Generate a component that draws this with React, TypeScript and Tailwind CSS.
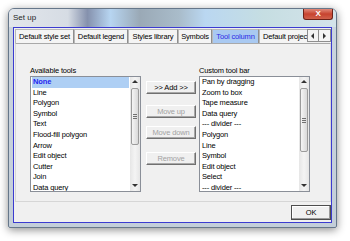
import React from 'react';

const availableTools = [
  'None',
  'Line',
  'Polygon',
  'Symbol',
  'Text',
  'Flood-fill polygon',
  'Arrow',
  'Edit object',
  'Cutter',
  'Join',
  'Data query',
];

const customTools = [
  'Pan by dragging',
  'Zoom to box',
  'Tape measure',
  'Data query',
  '--- divider ---',
  'Polygon',
  'Line',
  'Symbol',
  'Edit object',
  'Select',
  '--- divider ---',
];

const tabs = [
  { label: 'Default style set', w: 'w-[59px]' },
  { label: 'Default legend', w: 'w-[54px]' },
  { label: 'Styles library', w: 'w-[50px]' },
  { label: 'Symbols', w: 'w-[34px]' },
  { label: 'Tool column', w: 'w-[47px]', active: true },
  { label: 'Default projec', w: 'w-[48px]' },
];

const Arrow = ({ dir }: { dir: 'up' | 'down' | 'left' | 'right' }) => {
  const pts = {
    up: '0,4 3,1 6,4',
    down: '0,1 3,4 6,1',
    left: '4,0 1,3 4,6',
    right: '1,0 4,3 1,6',
  }[dir];
  return (
    <svg width="6" height="6" viewBox="0 0 6 6">
      <polygon points={pts} fill="#333" />
    </svg>
  );
};

interface ListBoxProps {
  items: string[];
  selected?: number;
  thumbHeight: string;
}

const ListBox: React.FC<ListBoxProps> = ({ items, selected, thumbHeight }) => (
  <div className="h-[116px] border border-[#8a8f98] bg-white flex">
    <div className="flex-1 overflow-hidden">
      {items.map((item, i) => (
        <div
          key={i}
          className={
            i === selected
              ? 'mx-[1px] h-[10.6px] leading-[10.6px] pl-[1px] whitespace-nowrap bg-[#aecff4] text-[#2525f0] font-bold'
              : 'mx-[1px] h-[10.6px] leading-[10.6px] pl-[1px] whitespace-nowrap text-black'
          }
        >
          {item}
        </div>
      ))}
    </div>
    <div className="w-[10px] flex flex-col bg-gradient-to-r from-[#e6e6e6] via-[#f4f4f4] to-[#e6e6e6]">
      <div className="h-[10px] flex items-center justify-center">
        <Arrow dir="up" />
      </div>
      <div
        className={`${thumbHeight} mt-[1px] mx-[1px] rounded-[2px] border border-[#9b9b9b] bg-gradient-to-r from-[#f5f5f5] to-[#d9d9d9] flex flex-col items-center justify-center gap-[1px]`}
      >
        <div className="w-[4px] h-[1px] bg-[#707070]" />
        <div className="w-[4px] h-[1px] bg-[#707070]" />
        <div className="w-[4px] h-[1px] bg-[#707070]" />
      </div>
      <div className="flex-1" />
      <div className="h-[10px] flex items-center justify-center">
        <Arrow dir="down" />
      </div>
    </div>
  </div>
);

const Button = ({ label, disabled, extra }: { label: string; disabled?: boolean; extra?: string }) => (
  <div
    className={`h-[13px] w-[50px] flex items-center justify-center border border-t-white border-l-white border-r-[#707070] border-b-[#707070] bg-[#f0f0f0] shadow-[inset_-1px_-1px_0_#a8a8a8] ${
      disabled ? 'text-[#a2a2a2]' : 'text-black'
    } ${extra ?? ''}`}
  >
    {label}
  </div>
);

export default function App() {
  return (
    <div className="w-[350px] h-[241px] bg-white overflow-hidden pt-[8px] pl-[8px] font-['Liberation_Sans',Arial,sans-serif] text-[7.5px] tracking-[-0.15px]">
      <div className="w-[329px] h-[220px] rounded-t-[6px] rounded-b-[2px] border border-[#66778a] bg-gradient-to-b from-[#cbd5df] to-[#c3ced9] shadow-[0_2px_8px_rgba(0,0,0,0.45)] flex flex-col px-[4px] pb-[4px]">
        {/* title bar */}
        <div className="-mx-[4px] px-[4px] h-[18px] rounded-t-[5px] flex justify-between bg-[linear-gradient(90deg,#e2e6eb_0%,#d6dce4_18%,#8591ad_24%,#b7d5f1_31%,#9aa9b6_40%,#a9bcca_52%,#bad7f1_60%,#c6dee2_78%,#d4e3ea_100%)]">
          <div className="h-[18px] flex items-center text-[8px] text-[#1e1e1e] tracking-normal">Set up</div>
          <div className="w-[30px] h-[11px] mr-[-1px] rounded-b-[3px] border border-[#6d2218] border-t-0 bg-gradient-to-b from-[#e0897a] via-[#c7432f] to-[#d0604b] flex items-center justify-center text-white font-bold text-[8px] leading-none">
            X
          </div>
        </div>

        {/* client area */}
        <div className="h-[196px] border border-[#3b3bd0] bg-[#f0f0f0] flex flex-col">
          {/* tabs */}
          <div className="h-[14px] mt-[1px] ml-[1px] flex">
            {tabs.map((t, i) => (
              <div
                key={i}
                className={`${t.w} h-[14px] border-t border-l border-[#b8b8b8] border-r-[#8e8e8e] ${
                  i === tabs.length - 1 ? 'justify-start pl-[3px]' : 'border-r justify-center'
                } flex items-center overflow-hidden whitespace-nowrap ${
                  t.active ? 'bg-[#a9c9f1] text-[#2b2be6]' : 'bg-[#f4f4f4] text-black'
                }`}
              >
                {t.label}
              </div>
            ))}
            <div className="w-[12px] h-[13px] border border-[#8e8e8e] bg-[#f4f4f4] flex items-center justify-center">
              <Arrow dir="left" />
            </div>
            <div className="w-[12px] h-[13px] border border-l-0 border-[#8e8e8e] bg-[#f4f4f4] flex items-center justify-center">
              <Arrow dir="right" />
            </div>
          </div>

          {/* tab page */}
          <div className="ml-[1px] w-[316px] h-[159px] border border-[#d6d6d6] border-t-[#a9a9a9] pt-[22px] pl-[14px] flex">
            <div className="w-[111px] flex flex-col">
              <div className="h-[9px] leading-[9px] text-black">Available tools</div>
              <div className="mt-[1px]">
                <ListBox items={availableTools} selected={0} thumbHeight="h-[57px]" />
              </div>
            </div>

            <div className="ml-[5px] w-[50px] flex flex-col pt-[15px]">
              <Button label=">> Add >>" />
              <Button label="Move up" disabled extra="mt-[11px]" />
              <Button label="Move down" disabled extra="mt-[8px]" />
              <Button label="Remove" disabled extra="mt-[13px]" />
            </div>

            <div className="ml-[3px] w-[111px] flex flex-col">
              <div className="h-[9px] leading-[9px] text-black">Custom tool bar</div>
              <div className="mt-[1px]">
                <ListBox items={customTools} thumbHeight="h-[64px]" />
              </div>
            </div>
          </div>

          {/* bottom buttons */}
          <div className="mt-[3px] flex justify-end">
            <div className="w-[40px] h-[15px] flex items-center justify-center border border-[#4d4d4d] bg-[#f0f0f0] shadow-[inset_-1px_-1px_0_#9a9a9a,inset_1px_1px_0_#ffffff] text-black">
              OK
            </div>
          </div>
        </div>
      </div>
    </div>
  );
}
